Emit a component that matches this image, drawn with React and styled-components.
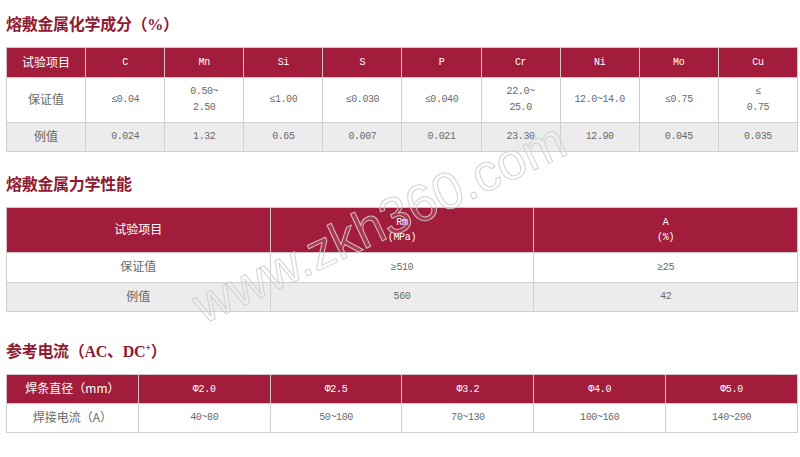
import React from "react";
import styled, { createGlobalStyle } from "styled-components";

const GlobalStyle = createGlobalStyle`
  body {
    margin: 0;
    background: #ffffff;
    font-family: "Liberation Sans", "Noto Sans CJK SC", sans-serif;
  }
`;

const Page = styled.div`
  position: relative;
  width: 792px;
  padding: 0 2px 0 6px;
  overflow: hidden;
  height: 457px;
`;

const Title = styled.h2`
  margin: ${(p) => p.$top}px 0 ${(p) => p.$bottom}px 0;
  font-family: "Liberation Serif", "Noto Sans CJK SC", serif;
  font-size: 16px;
  line-height: 22px;
  font-weight: bold;
  color: #8e1b33;
  letter-spacing: -0.3px;

  sup {
    font-size: 10px;
    line-height: 0;
  }
`;

const Table = styled.table`
  width: 792px;
  border-collapse: collapse;
  table-layout: fixed;
`;

const Row = styled.tr`
  height: ${(p) => p.$h}px;
  background: ${(p) => (p.$shade ? "#ececec" : "#ffffff")};
`;

const Head = styled.th`
  background: #a21d3b;
  color: #ffffff;
  border: 1px solid #d2c4c7;
  font-weight: normal;
  font-family: "Liberation Mono", "Noto Sans CJK SC", monospace;
  font-size: 10px;
  line-height: 15px;
  letter-spacing: -0.3px;
  text-align: center;
  vertical-align: middle;
  padding: 0;
`;

const Cell = styled.td`
  border: 1px solid #d0d0d0;
  color: #6a6a6a;
  font-family: "Liberation Mono", "Noto Sans CJK SC", monospace;
  font-size: 10px;
  line-height: 16px;
  letter-spacing: -0.4px;
  text-align: center;
  vertical-align: middle;
  padding: 0;
`;

const Cjk = styled.span`
  font-family: "Noto Sans CJK SC", sans-serif;
  font-size: 12px;
  letter-spacing: 0;
`;

const Watermark = styled.div`
  position: absolute;
  left: 196px;
  top: 282px;
  transform: rotate(-25deg);
  transform-origin: left center;
  font-family: "Liberation Sans", sans-serif;
  font-size: 52px;
  line-height: 52px;
  color: rgba(255, 255, 255, 0.12);
  -webkit-text-stroke: 1px rgba(205, 205, 205, 0.9);
  white-space: nowrap;
  pointer-events: none;
`;

const chem = ["C", "Mn", "Si", "S", "P", "Cr", "Ni", "Mo", "Cu"];
const guaranteed = [
  "≤0.04",
  ["0.50~", "2.50"],
  "≤1.00",
  "≤0.030",
  "≤0.040",
  ["22.0~", "25.0"],
  "12.0~14.0",
  "≤0.75",
  ["≤", "0.75"],
];
const sample = ["0.024", "1.32", "0.65", "0.007", "0.021", "23.30", "12.90", "0.045", "0.035"];

const diameters = ["Φ2.0", "Φ2.5", "Φ3.2", "Φ4.0", "Φ5.0"];
const currents = ["40~80", "50~100", "70~130", "100~160", "140~200"];

const renderValue = (v) =>
  Array.isArray(v) ? (
    <>
      {v[0]}
      <br />
      {v[1]}
    </>
  ) : (
    v
  );

export default function App() {
  return (
    <>
      <GlobalStyle />
      <Page>
        <Title $top={14} $bottom={11}>熔敷金属化学成分（%）</Title>
        <Table>
          <tbody>
            <Row $h={30}>
              <Head><Cjk>试验项目</Cjk></Head>
              {chem.map((c) => (
                <Head key={c}>{c}</Head>
              ))}
            </Row>
            <Row $h={45}>
              <Cell><Cjk>保证值</Cjk></Cell>
              {guaranteed.map((v, i) => (
                <Cell key={i}>{renderValue(v)}</Cell>
              ))}
            </Row>
            <Row $h={29} $shade>
              <Cell><Cjk>例值</Cjk></Cell>
              {sample.map((v, i) => (
                <Cell key={i}>{v}</Cell>
              ))}
            </Row>
          </tbody>
        </Table>

        <Title $top={22} $bottom={11}>熔敷金属力学性能</Title>
        <Table>
          <tbody>
            <Row $h={45}>
              <Head><Cjk>试验项目</Cjk></Head>
              <Head>Rm<br />(MPa)</Head>
              <Head>A<br />(%)</Head>
            </Row>
            <Row $h={30}>
              <Cell><Cjk>保证值</Cjk></Cell>
              <Cell>≥510</Cell>
              <Cell>≥25</Cell>
            </Row>
            <Row $h={29} $shade>
              <Cell><Cjk>例值</Cjk></Cell>
              <Cell>560</Cell>
              <Cell>42</Cell>
            </Row>
          </tbody>
        </Table>

        <Title $top={29} $bottom={11}>
          参考电流（AC、DC<sup>+</sup>）
        </Title>
        <Table>
          <tbody>
            <Row $h={29}>
              <Head><Cjk>焊条直径（mm）</Cjk></Head>
              {diameters.map((d) => (
                <Head key={d}>{d}</Head>
              ))}
            </Row>
            <Row $h={29}>
              <Cell><Cjk>焊接电流（A）</Cjk></Cell>
              {currents.map((c) => (
                <Cell key={c}>{c}</Cell>
              ))}
            </Row>
          </tbody>
        </Table>

        <Watermark>www.zkh360.com</Watermark>
      </Page>
    </>
  );
}
